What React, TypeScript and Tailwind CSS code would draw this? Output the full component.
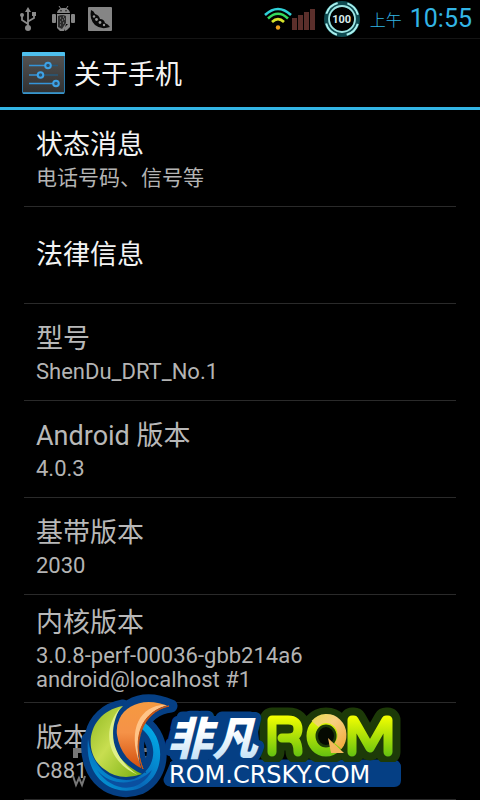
const latin = "font-['Roboto','Noto_Sans_CJK_SC',sans-serif]";

type Item = { title: string; lines?: string[]; enabled?: boolean; cjk?: boolean };

const items: Item[] = [
  { title: '状态消息', lines: ['电话号码、信号等'], enabled: true, cjk: true },
  { title: '法律信息', enabled: true },
  { title: '型号', lines: ['ShenDu_DRT_No.1'] },
  { title: 'Android 版本', lines: ['4.0.3'] },
  { title: '基带版本', lines: ['2030'] },
  { title: '内核版本', lines: ['3.0.8-perf-00036-gbb214a6', 'android@localhost #1'] },
  { title: '版本号', lines: ['C881'] },
];

const ROM_R = 'M272 752V720H288Q298 720 298 729Q298 738 288 738H282M290 738Q298 739 298 752';
const ROM_M = 'M352 752V720H354L370 748L386 720H388V752';
const RING = 'M145 723C166 738 166 776 140 788C114 798 84 779 88 739C92 768 112 784 134 779C157 770 159 743 142 729Z';
const GREEN = 'M123 706C88 712 81 752 104 769Q120 782 142 774C112 760 100 730 123 706Z';
const ORANGE = 'M171 706C138 692 113 710 116 735C119 755 130 764 144 771C130 743 140 710 171 706Z';

function UsbIcon() {
  return (
    <svg width="16" height="24" viewBox="0 0 16 24" fill="none" stroke="#8a8a8a" strokeWidth="1.800">
      <path d="M8 3V20M8 17L2 13V9M8 14.500L14 11V7" />
      <path d="M8 0L11 5H5Z" fill="#8a8a8a" stroke="none" />
      <circle cx="2" cy="8" r="2" fill="#8a8a8a" stroke="none" />
      <rect x="12" y="5" width="4" height="4" fill="#8a8a8a" stroke="none" />
      <circle cx="8" cy="21" r="3" fill="#8a8a8a" stroke="none" />
    </svg>
  );
}

function DebugIcon() {
  return (
    <svg width="24" height="26" viewBox="0 0 24 26" fill="#858585">
      <path d="M5 7C5.500 3.500 8 2 11.500 2S17.500 3.500 18 7Z" />
      <path d="M7 0L9 3M16 0L14 3" stroke="#858585" strokeWidth="1" />
      <circle cx="9" cy="4.700" r=".7" fill="#000" />
      <circle cx="14" cy="4.700" r=".7" fill="#000" />
      <rect x="0" y="8" width="4" height="9" rx="1" />
      <rect x="19" y="8" width="4" height="9" rx="1" />
      <path d="M5 8H18V18H14L12 25H8L5 22Z" />
      <path d="M6 10Q10 8 14 10V17L10 23L6 21Z" fill="#2c2c2c" />
      <path d="M8 12H9M11 11H12M10 14H11M12 13H13M8 16H9M11 17H12M8 19H9" stroke="#999" />
      <path d="M18 16V21L15 24L13 25L12 22Z" />
    </svg>
  );
}

function PeapodIcon() {
  return (
    <svg width="24" height="24" viewBox="0 0 24 24">
      <rect width="24" height="24" rx="1" fill="#858585" />
      <path d="M3 3Q6 4 7 7Q11 8 12 12Q16 12 17 16Q20 17 22 20Q13 23 7 18Q1 12 3 3Z" fill="#080808" />
      <g fill="#959595">
        <circle cx="6" cy="9.500" r="1.200" /><circle cx="8.500" cy="12.500" r="1.400" />
        <circle cx="12" cy="15.500" r="1.400" /><circle cx="16" cy="18" r="1.200" />
      </g>
    </svg>
  );
}

function WifiIcon() {
  return (
    <svg width="28" height="24" viewBox="0 0 28 24" fill="none" strokeWidth="2.600">
      <path d="M1 8Q14 -4 27 8" stroke="#2fd0d8" />
      <path d="M4 11.500Q14 2 24 11.500" stroke="#35d95c" />
      <path d="M8 15Q14 9 20 15" stroke="#d5e32c" />
      <circle cx="14" cy="20.500" r="2.200" fill="#f0a01c" />
    </svg>
  );
}

function SignalIcon() {
  return (
    <svg width="24" height="24" viewBox="0 0 24 24" fill="#5b2f2b">
      <rect x="0" y="11" width="5" height="12" />
      <rect x="6" y="8" width="5" height="15" />
      <rect x="12" y="5" width="5" height="18" />
      <rect x="18" y="2" width="5" height="21" />
    </svg>
  );
}

function Battery() {
  return (
    <div className="relative flex h-9 w-9 items-center justify-center">
      <svg className="absolute inset-0" width="36" height="36" viewBox="0 0 36 36" fill="none">
        <circle cx="18" cy="18" r="15" stroke="#0e4a50" strokeWidth="6" />
        <circle cx="18" cy="18" r="13" stroke="#9fe6e4" strokeWidth="1.800" />
        <circle cx="18" cy="18" r="16.500" stroke="#a9f0ee" strokeWidth="2" strokeDasharray="16 9.920" strokeDashoffset="-4.960" />
      </svg>
      <span className="relative text-[11px] font-bold leading-none text-[#d8ecec]">100</span>
    </div>
  );
}

function SettingsIcon() {
  return (
    <svg width="44" height="42" viewBox="0 0 44 42">
      <defs>
        <linearGradient id="panel" x1="0" y1="0" x2="0" y2="1">
          <stop offset="0" stopColor="#555" /><stop offset="1" stopColor="#303030" />
        </linearGradient>
      </defs>
      <rect x="0.500" y="0.500" width="42" height="41" rx="1" fill="url(#panel)" stroke="#2a78a8" />
      <path d="M0 1Q0 0 1 0H42Q43 0 43 1V4H0Z" fill="#4fc0ee" />
      <path d="M1 41H42" stroke="#3b9fd8" strokeWidth="1.500" />
      <g strokeWidth="1.500" stroke="#3494d8">
        <path d="M7 13.500H23M7 23H16M7 31.500H31" />
        <path d="M29 13.500H36M22 23H36" stroke="#27587a" />
      </g>
      <g fill="#2d506a" stroke="#3ea2e6" strokeWidth="2">
        <circle cx="26" cy="13.500" r="2.800" /><circle cx="18.500" cy="23" r="2.800" /><circle cx="34" cy="31.500" r="2.800" />
      </g>
    </svg>
  );
}

function RomLogo() {
  return (
    <svg className="absolute left-[70px] top-[690px]" width="340" height="110" viewBox="70 690 340 110" role="img" aria-label="非凡ROM ROM.CRSKY.COM">
      <defs>
        <linearGradient id="lime" gradientUnits="userSpaceOnUse" x1="0" y1="716" x2="0" y2="757"><stop offset="0" stopColor="#f4ff00" /><stop offset="1" stopColor="#62c010" /></linearGradient>
        <linearGradient id="leaf" x1="0" y1="0" x2="1" y2="1"><stop offset="0" stopColor="#8fb820" /><stop offset=".45" stopColor="#c8de50" /><stop offset="1" stopColor="#78b010" /></linearGradient>
        <linearGradient id="flame" x1=".6" y1="0" x2=".6" y2="1"><stop offset="0" stopColor="#f59a40" /><stop offset=".45" stopColor="#f59248" /><stop offset="1" stopColor="#d04a08" /></linearGradient>
        <linearGradient id="ocean" x1="1" y1="0" x2="0" y2="1"><stop offset="0" stopColor="#00b4ee" /><stop offset=".6" stopColor="#0868b8" /><stop offset="1" stopColor="#00a8e0" /></linearGradient>
        <linearGradient id="ice" x1="0" y1="0" x2="0" y2="1"><stop offset=".3" stopColor="#fff" /><stop offset="1" stopColor="#b8dcf5" /></linearGradient>
        <linearGradient id="gold" gradientUnits="userSpaceOnUse" x1="312" y1="716" x2="345" y2="750"><stop offset="0" stopColor="#e8dc50" /><stop offset=".4" stopColor="#f8cf80" /><stop offset="1" stopColor="#f0a838" /></linearGradient>
      </defs>
      <g fill="#777">
        <path d="M73 748H90V753H78V758H73ZM136 748H154V752H136ZM136 756H154V759H136Z" />
        <path d="M73 776L76 785L79 778L82 785L85 776" fill="none" stroke="#777" strokeWidth="2" />
      </g>
      <g fill="#053f84" stroke="#053f84" strokeWidth="13" strokeLinejoin="round">
        <path d={RING} />
        <path d={GREEN} />
        <path d={ORANGE} />
        <path d="M176 766H394V780H170Z" />
        <path d="M183 718H207L204 755H176ZM222 718H250L254 754H218Z" />
      </g>
      <path d={RING} fill="url(#ocean)" />
      <path d="M97 770C112 788 138 785 152 770C142 792 114 795 97 770Z" fill="#0a4fa0" />
      <path d={GREEN} fill="url(#leaf)" />
      <path d="M120 708C101 730 107 762 138 775C118 762 104 738 120 708Z" fill="#dff08a" />
      <path d={ORANGE} fill="url(#flame)" stroke="#053f84" strokeWidth="2" />
      <path d="M166 705C142 704 126 728 140 764C134 742 140 714 166 705Z" fill="#ffc488" />
      <path d="M169 706C142 710 131 738 143 769C132 743 142 712 169 706Z" fill="#c85818" stroke="#c85818" />
      <g fill="none" strokeLinecap="round" strokeLinejoin="round">
        <g stroke="#1d3a08" strokeWidth="25">
          <path d={ROM_R} />
          <ellipse cx="326" cy="736" rx="15" ry="16" />
          <path d={ROM_M} />
        </g>
        <ellipse cx="326" cy="736" rx="8" ry="9" fill="#050a02" />
        <g stroke="url(#lime)" strokeWidth="9">
          <path d={ROM_R} />
          <ellipse cx="326" cy="736" rx="15" ry="16" />
          <path d={ROM_M} />
        </g>
        <path d="M315 724A15 16 0 0 1 338 746" stroke="url(#gold)" strokeWidth="9" strokeLinecap="butt" />
      </g>
      <path d="M328 738L331 753L344 753Z" fill="#f4b85c" />
      <text x="167" y="755" fontFamily="Liberation Sans, Noto Sans CJK SC, sans-serif" fontSize="45" fontWeight="900" fontStyle="italic" fill="url(#ice)" stroke="#053f84" strokeWidth="12" strokeLinejoin="round" paintOrder="stroke">非凡</text>
      <path d="M170 762H396Q401 762 401 767V780Q401 787 394 787H170Z" fill="#053f84" />
      <text x="169" y="783" fontFamily="DejaVu Sans, sans-serif" fontSize="24" fill="#fff">ROM.CRSKY.COM</text>
    </svg>
  );
}

export default function App() {
  return (
    <div className={`${latin} relative min-h-screen overflow-hidden bg-black`}>
      <header>
        <div className="flex h-[39px] items-center justify-between border-b border-[#141414] pr-2 pl-5">
          <div className="flex items-center gap-3">
            <div className="mr-1"><UsbIcon /></div>
            <DebugIcon />
            <PeapodIcon />
          </div>
          <div className="flex items-center text-[#33b5e5]">
            <WifiIcon />
            <SignalIcon />
            <div className="ml-2"><Battery /></div>
            <span className="ml-[10px] pt-1 text-base leading-6 font-light">上午</span>
            <span className="ml-2 text-[25px] leading-6">10:55</span>
          </div>
        </div>
        <div className="flex h-[71px] items-center gap-2 border-b-3 border-[#33b5e5] px-[22px]">
          <SettingsIcon />
          <h1 className="pt-1 text-[27px] leading-8 text-[#f3f3f3]">关于手机</h1>
        </div>
      </header>
      <ul className="px-6">
        {items.map((item) => (
          <li key={item.title} className="flex min-h-[97px] flex-col justify-center gap-[3px] border-b border-[#2a2a2a] px-3 py-[10px]">
            <h2 className={`text-[27px] leading-9 ${item.enabled ? 'text-[#f3f3f3]' : 'text-[#b8b8b8]'}`}>{item.title}</h2>
            {item.lines && (
              <div className={`leading-6 text-[#b4b4b4] ${item.cjk ? 'text-[21px]' : 'text-[22px]'}`}>
                {item.lines.map((line) => (
                  <p key={line}>{line}</p>
                ))}
              </div>
            )}
          </li>
        ))}
      </ul>
      <RomLogo />
    </div>
  );
}
